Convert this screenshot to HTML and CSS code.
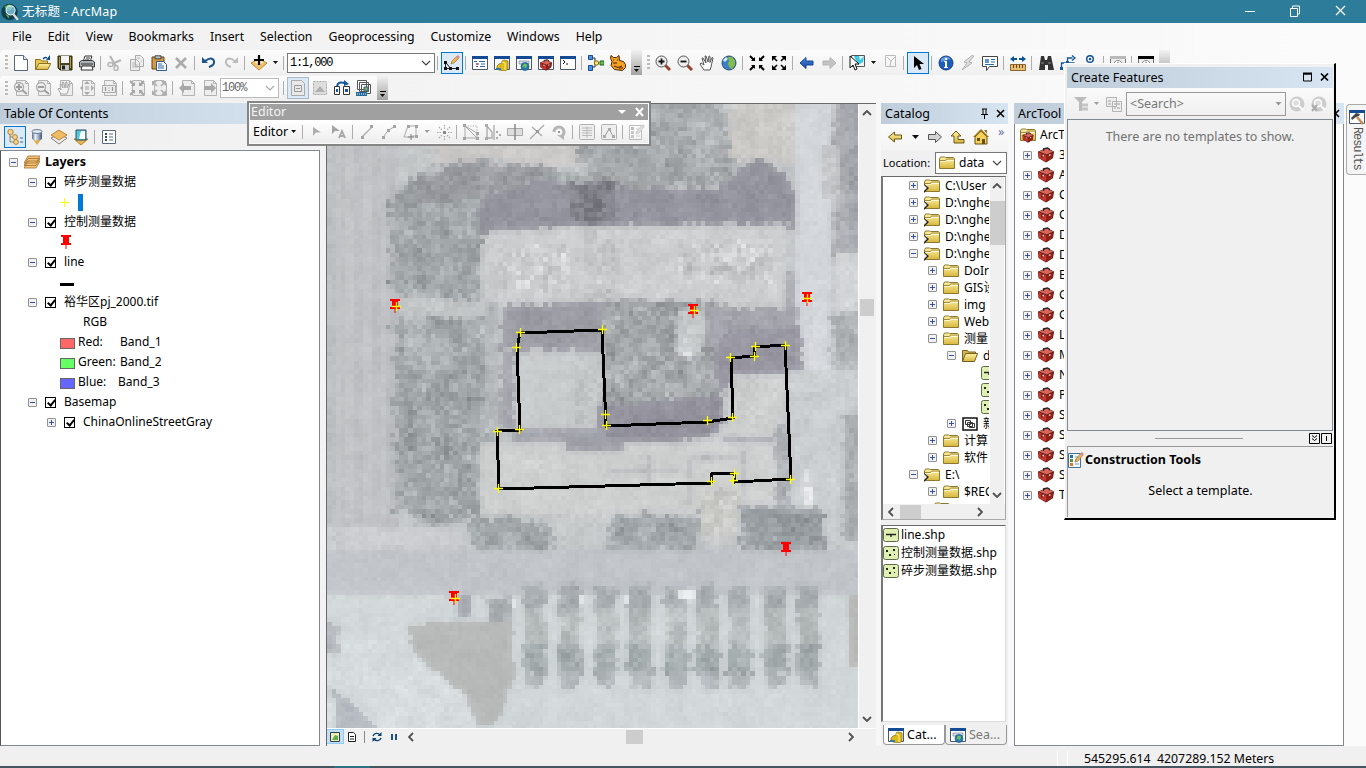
FILE: index.html
```html
<!DOCTYPE html>
<html lang="zh-CN">
<head>
<meta charset="utf-8">
<title>无标题 - ArcMap</title>
<link rel="stylesheet" href="styles.css">
</head>
<body>
<svg class="defs" aria-hidden="true">
<defs>
<linearGradient id="gold" x1="0" y1="0" x2="0" y2="1"><stop offset="0" stop-color="#fff3a8"/><stop offset="1" stop-color="#d8b63c"/></linearGradient>
<linearGradient id="blue" x1="0" y1="0" x2="0" y2="1"><stop offset="0" stop-color="#4f8ee0"/><stop offset="1" stop-color="#123f9c"/></linearGradient>
<linearGradient id="cyl" x1="0" y1="0" x2="1" y2="0"><stop offset="0" stop-color="#59718c"/><stop offset=".35" stop-color="#e9f0f7"/><stop offset="1" stop-color="#3f5672"/></linearGradient>
</defs>
<symbol id="app" viewBox="0 0 16 16"><circle cx="7.500" cy="8" r="7.300" fill="#123d4d"/><path d="M3 3l4-2 4 2-2 3-4 1zM4 10l3 1v3z" fill="#5fae55"/><circle cx="8.500" cy="6.500" r="4" fill="#8fd3ee" fill-opacity=".75" stroke="#d8eef4"/><path d="M11 10l4 5" stroke="#e9e2d8" stroke-width="2"/></symbol>
<symbol id="new" viewBox="0 0 16 16"><path d="M1.500.5h9l4 4v11h-13z" fill="#fff" stroke="#59677a"/><path d="M10.500.5v4h4" fill="#dfe8f2" stroke="#59677a"/></symbol>
<symbol id="open" viewBox="0 0 16 16"><path d="M.5 14.500V4.500h5l1 1.500h6v3" fill="#e9c94b" stroke="#8a7024"/><path d="M.8 14.500l3-6h12l-3 6z" fill="url(#gold)" stroke="#8a7024"/><path d="M8 4q2-2.500 4-1" fill="none" stroke="#0c4a86" stroke-width="1.500"/><path d="M15 0v5h-4z" fill="#0c4a86"/></symbol>
<symbol id="save" viewBox="0 0 16 16"><path d="M1 1h14v14H3l-2-2z" fill="#4a431f" stroke="#332e15"/><path d="M2 2h1v11H2zM13 2h1v11h-1z" fill="#b5a435"/><path d="M4 1h8v7H4z" fill="#f2f4f6"/><path d="M4 10h8v5H4z" fill="#c6c9cc"/><path d="M5 10.500h3v4H5z" fill="#25221a"/></symbol>
<symbol id="print" viewBox="0 0 16 16"><path d="M4 7l2-6h7l-2 6z" fill="#fff" stroke="#333"/><path d="M.5 7l2-1.500h11L15.500 7v5H.5z" fill="#aeb2b6" stroke="#3c3c3c"/><path d="M2 9h12M7 3h4M6 5h4" stroke="#333"/><path d="M3 11h10l1 4H2z" fill="#fff" stroke="#333"/></symbol>
<symbol id="cut" viewBox="0 0 16 16"><path d="M3 1l6 10M14 5L5 9" stroke="#b5b5b5" stroke-width="2"/><ellipse cx="3.500" cy="9.500" rx="2.500" ry="2" fill="none" stroke="#b5b5b5" stroke-width="1.500"/><ellipse cx="9" cy="13" rx="2" ry="2.500" fill="none" stroke="#b5b5b5" stroke-width="1.500"/></symbol>
<symbol id="copy" viewBox="0 0 16 16"><path d="M6.500.5h5l3 3v8h-8zM1.500 4.500h6l3 3v8h-9z" fill="#eee" stroke="#aaa"/><path d="M3 8h4M3 10h6M3 12h6M8 3h3M12 6h1" stroke="#b6b6b6"/></symbol>
<symbol id="paste" viewBox="0 0 16 16"><path d="M1 2h12v12H1z" fill="#d39a42" stroke="#63431c"/><path d="M4 .8h6v3H4z" fill="#b9c1c9" stroke="#444"/><path d="M5.500 6.500h7l3 3v6h-10z" fill="#fff" stroke="#31598c"/><path d="M7 9h4M7 11h6M7 13h6" stroke="#2d62a7"/></symbol>
<symbol id="del" viewBox="0 0 16 16"><path d="M3 3l10 10M13 3L3 13" stroke="#ababab" stroke-width="2.600"/></symbol>
<symbol id="undo" viewBox="0 0 16 16"><path d="M4 6q7-5 9 0 1 4-5 6" fill="none" stroke="#1d528c" stroke-width="2"/><path d="M1 2v6h6z" fill="#1d528c"/></symbol>
<symbol id="redo" viewBox="0 0 16 16"><path d="M12 6q-7-5-9 0-1 4 5 6" fill="none" stroke="#bdbdbd" stroke-width="2"/><path d="M15 2v6H9z" fill="#bdbdbd"/></symbol>
<symbol id="add" viewBox="0 0 16 16"><path d="M0 8l8-4 8 4-8 7z" fill="#eec36b" stroke="#b98532"/><path d="M3 7l5-2 5 2-5 3z" fill="#ffe6b3"/><path d="M8 0v10M3 5h10" stroke="#000" stroke-width="2.200"/></symbol>
<symbol id="edit" viewBox="0 0 16 16"><path d="M1.500 7l5 6.500h8M1.500 7v6.500h5" fill="none" stroke="#222"/><path d="M0 6h3v3H0zM0 12h3v3H0zM5 12h3v3H5zM12 12h3v3h-3z" fill="#111"/><path d="M7 9l1-3 5-5 2 2-5 5z" fill="#efb756" stroke="#96631f" stroke-width=".6"/><path d="M12 2l2-2 2 2-2 2z" fill="#dc8d8d"/></symbol>
<symbol id="win" viewBox="0 0 16 16"><path d="M.5 1.500h15v13H.5z" fill="#fdfdfd" stroke="#4d5968"/><path d="M0 1h16v3H0z" fill="#154b95"/></symbol>
<symbol id="toc" viewBox="0 0 16 16"><use href="#win"/><path d="M2 6.500h3M7 6.500h6M4 9h3M9 9h4M4 11.500h2M8 11.500h5" stroke="#2b64a4"/><path d="M4 9h2M4 11.500h1" stroke="#d22"/></symbol>
<symbol id="cat" viewBox="0 0 16 16"><use href="#win"/><path d="M5 9l3-1v-2l2-1 4 1v8l-3 2-6-1-2-1v-3z" fill="#ddb91b" stroke="#80690f" stroke-width=".7"/><path d="M8 7l3 1v7" fill="none" stroke="#fff08b"/><path d="M2 13h5v2H2z" fill="#3379a4"/></symbol>
<symbol id="search" viewBox="0 0 16 16"><use href="#win"/><path d="M3 6h10v3H3z" fill="#d8e2ed" stroke="#72869b" stroke-width=".7"/><circle cx="9" cy="11.500" r="4" fill="#2678b7" stroke="#205a7b" stroke-width=".7"/><path d="M8 8.500l3 1-1 4-2-2-2 1z" fill="#73c553"/></symbol>
<symbol id="boxwin" viewBox="0 0 16 16"><use href="#win"/><use href="#tbx" x="1.500" y="4" width="13" height="12"/></symbol>
<symbol id="py" viewBox="0 0 16 16"><use href="#win"/><path d="M3 5l2 2-2 2M6 9h2" fill="none" stroke="#111"/></symbol>
<symbol id="model" viewBox="0 0 16 16"><path d="M4 3h3v9H4M7 8h3M12 8h2" fill="none" stroke="#333"/><path d="M.5.5h4v4h-4zM.5 10.500h4v5h-4z" fill="#4c94e3" stroke="#174e9a"/><circle cx="8.500" cy="8" r="2.200" fill="#ffe56a" stroke="#7e6717"/><path d="M12 6h4v4h-4z" fill="#6bc158" stroke="#1d6625"/></symbol>
<symbol id="cat2" viewBox="0 0 16 16"><path d="M1 .5l2.500 2h3L9 .5l.5 5 4 1q3 3 2 6l-3 3-8-1-3.500-4 1-4-1.500-3z" fill="#f6a126" stroke="#492500"/><path d="M3 5h1M7 5h1M3 8h4M4 11q4 3 8 0M9 13h4" stroke="#492500" fill="none"/></symbol>
<symbol id="zoomin" viewBox="0 0 16 16"><path d="M10 10l5 5" stroke="#95442b" stroke-width="3"/><circle cx="6.500" cy="6.500" r="5.500" fill="#eee" stroke="#555"/><path d="M3.500 6.500h6M6.500 3.500v6" stroke="#111" stroke-width="1.800"/></symbol>
<symbol id="zoomout" viewBox="0 0 16 16"><path d="M10 10l5 5" stroke="#95442b" stroke-width="3"/><circle cx="6.500" cy="6.500" r="5.500" fill="#eee" stroke="#555"/><path d="M3.500 6.500h6" stroke="#111" stroke-width="1.800"/></symbol>
<symbol id="hand" viewBox="0 0 16 16"><path d="M5 15l-4-6 1-1 3 2-2-7h1l3 5-1-7h1l2 6 1-6 1 .5v6l2-5 1 .5-2 9-1 3z" fill="#fff" stroke="#555"/></symbol>
<symbol id="globe" viewBox="0 0 16 16"><circle cx="8" cy="8" r="7" fill="#3c80c6" stroke="#315273"/><path d="M7 2l4 0 3 4v4l-3 4-2-1-2-4 1-3z" fill="#86bd48"/><path d="M3 6l3-3" stroke="#d8efff" stroke-width="2.500"/></symbol>
<symbol id="fixin" viewBox="0 0 16 16"><path d="M1 1l4 4M15 1l-4 4M1 15l4-4M15 15l-4-4" stroke="currentColor" stroke-width="2"/><path d="M6 2v4H2zM10 2v4h4zM6 14v-4H2zM10 14v-4h4z" fill="currentColor"/></symbol>
<symbol id="fixout" viewBox="0 0 16 16"><path d="M2 2l4 4M14 2l-4 4M2 14l4-4M14 14l-4-4" stroke="currentColor" stroke-width="1.600"/><path d="M1 1h5L1 6zM15 1h-5l5 5zM1 15h5l-5-5zM15 15h-5l5-5z" fill="currentColor"/></symbol>
<symbol id="back" viewBox="0 0 16 16"><path d="M1 8l6-5.500v3.500h7v4H7v3.500z" fill="url(#blue)" stroke="#194693"/></symbol>
<symbol id="fwd" viewBox="0 0 16 16"><path d="M15 8L9 2.500V6H2v4h7v3.500z" fill="#c3c3c3" stroke="#b4b4b4"/></symbol>
<symbol id="selfeat" viewBox="0 0 16 16"><path d="M2.500.5h13v11h-13z" fill="#f4f4f4" stroke="#555"/><path d="M5 1h5l1 4 4-4-1 6-5 3z" fill="#38cce4"/><path d="M1 1v12l3-3 2 5 2-1-2-5h4z" fill="#fff" stroke="#111"/></symbol>
<symbol id="clearsel" viewBox="0 0 16 16"><path d="M3.500.500h10v11h-10zM5 2l4 4 4-4M9 6l-1 5" fill="none" stroke="#bbb"/></symbol>
<symbol id="arrow" viewBox="0 0 16 16"><path d="M4 1v12l3-3 2 5 2.500-1-2-5H14z" fill="currentColor"/></symbol>
<symbol id="earrow" viewBox="0 0 16 16"><path d="M4 3v9l3-3.500h5z" fill="#adadad"/></symbol>
<symbol id="info" viewBox="0 0 16 16"><circle cx="8" cy="8" r="7" fill="#1d5dbb" stroke="#153d85"/><path d="M3 4q5-5 10 0-4 1-10 3z" fill="#669ae4"/><path d="M7 3h2v2H7zM6 6h3v6h1v1H6v-1h1V7H6z" fill="#fff"/></symbol>
<symbol id="bolt" viewBox="0 0 16 16"><path d="M12 .5L4 7l3 1-5 7 10-7-3-1 5-6z" fill="#ddd" stroke="#b3b3b3"/></symbol>
<symbol id="popup" viewBox="0 0 16 16"><path d="M.5 1.500h15v10h-8l-3 4v-4h-4z" fill="#fff" stroke="#444"/><path d="M3 4h4v4H3z" fill="#5b99d2"/><path d="M9 4.500h4M9 7h4M3 9.500h9" stroke="#266fac"/></symbol>
<symbol id="measure" viewBox="0 0 16 16"><path d="M0 4l4-3v2h3v2H4v2zM16 4l-4-3v2H9v2h3v2z" fill="#075293"/><path d="M.5 9.500h15v6H.5z" fill="#e8be75" stroke="#8b652c"/><path d="M3.500 10v3M6.500 10v3M9.500 10v3M12.500 10v3" stroke="#694513"/></symbol>
<symbol id="find" viewBox="0 0 16 16"><path d="M3 1h3l1 4h2l1-4h3l3 14h-6v-5H7v5H1z" fill="#333"/><path d="M3 8h3M10 8h3" stroke="#888"/></symbol>
<symbol id="path" viewBox="0 0 16 16"><path d="M1.500 14V8h6V3h5M12 .5l3 2.500-3 2.500M7 8h7v6" fill="none" stroke="#16579a" stroke-width="1.300"/><path d="M0 12h3v3H0zM6 6h3v3H6z" fill="#16579a"/></symbol>
<symbol id="xy" viewBox="0 0 16 16"><circle cx="8" cy="4" r="3.300" fill="#fff" stroke="#17538c" stroke-width="1.500"/><circle cx="8" cy="4" r="1.300" fill="#17538c"/></symbol>
<symbol id="clockwin" viewBox="0 0 16 16"><path d="M.5 1.500h15v13H.5z" fill="#eee" stroke="#777"/><path d="M0 1h16v3H0z" fill="currentColor"/><circle cx="8" cy="10" r="4.500" fill="#fff" stroke="#888"/><path d="M8 7v3h2" stroke="#555" fill="none"/></symbol>
<symbol id="gpage" viewBox="0 0 16 16"><path d="M3.500.5h9l3 3v12h-12z" fill="#eee" stroke="#b3b3b3"/><path d="M12.500.5v3h3" fill="none" stroke="#b3b3b3"/></symbol>
<symbol id="pzin" viewBox="0 0 16 16"><use href="#gpage"/><circle cx="6" cy="7" r="4.500" fill="#eee" stroke="#aaa" stroke-width="1.300"/><path d="M3 7h6M6 4v6M9 10l5 4" stroke="#9d9d9d" stroke-width="2"/></symbol>
<symbol id="pzout" viewBox="0 0 16 16"><use href="#gpage"/><circle cx="6" cy="7" r="4.500" fill="#eee" stroke="#aaa" stroke-width="1.300"/><path d="M3 7h6M9 10l5 4" stroke="#9d9d9d" stroke-width="2"/></symbol>
<symbol id="phand" viewBox="0 0 16 16"><use href="#gpage"/><path d="M4 14L1 9l1-1 2 2-1-6h1l2 4-.5-6h1l1.500 6L9 2h1v6l2-4h1l-2 7-1 3z" fill="#f3f3f3" stroke="#a8a8a8"/></symbol>
<symbol id="pfull" viewBox="0 0 16 16"><use href="#gpage"/><path d="M8 1l3 3H5zM8 15l3-3H5zM1 8l3-3v6zM15 8l-3-3v6z" fill="#aaa"/><path d="M6 6h4v4H6z" fill="#c9c9c9"/></symbol>
<symbol id="pone" viewBox="0 0 16 16"><use href="#gpage"/><path d="M1.500 5.500h13v7h-13z" fill="#eee" stroke="#aaa"/><path d="M4.500 7v4M11.500 7v4M8 7.500v1M8 10v1" stroke="#999" stroke-width="1.300"/></symbol>
<symbol id="pin4" viewBox="0 0 16 16"><use href="#gpage"/><g color="#a5a5a5"><use href="#fixin"/></g></symbol>
<symbol id="pout4" viewBox="0 0 16 16"><use href="#gpage"/><g color="#adadad"><use href="#fixout"/></g></symbol>
<symbol id="pback" viewBox="0 0 16 16"><use href="#gpage"/><path d="M0 8l5-5v3h7v4H5v3z" fill="#a8a8a8"/></symbol>
<symbol id="pfwd" viewBox="0 0 16 16"><use href="#gpage"/><path d="M15 8l-5-5v3H3v4h7v3z" fill="#a8a8a8"/></symbol>
<symbol id="draft" viewBox="0 0 16 16"><path d="M1.500.5h10l3 3v12h-13z" fill="#e8e8e8" stroke="#aaa"/><path d="M4.500 5.500h7v6h-7zM6 8.500h4" fill="none" stroke="#999"/></symbol>
<symbol id="focus" viewBox="0 0 16 16"><path d="M1.500 1.500h13v13h-13z" fill="#ddd" stroke="#aaa" stroke-dasharray="2 1"/><path d="M3 12l5-6 5 6z" fill="#b0b0b0"/></symbol>
<symbol id="layout" viewBox="0 0 16 16"><path d="M.5 6.500h5v8h-5zM9.500 6.500h6v8h-6z" fill="#fff" stroke="#333"/><path d="M3 6q1-5 8-3" stroke="#155798" stroke-width="2" fill="none"/><path d="M10 0l5 4-5 2zM2 9h2v3H2zM11 9h3v3h-3z" fill="#155798"/></symbol>
<symbol id="ddp" viewBox="0 0 16 16"><path d="M1.500.5h9v9h-9zM3.500 2.500h9v9h-9zM5.500 4.500h9v9h-9z" fill="#fff" stroke="#555"/><path d="M8 7h4v4H8z" fill="#74aa70" stroke="#467"/><path d="M0 12h11v4H0z" fill="#246799"/><path d="M1 14h9" stroke="#fff" stroke-dasharray="1 1"/></symbol>
<symbol id="lorder" viewBox="0 0 16 16"><path d="M3 5v8h5M3 8h5" fill="none" stroke="#8f8160"/><path d="M13 9h3M13 13h3" stroke="#34689c"/><circle cx="3.500" cy="3" r="2.700" fill="#f7d48d" stroke="#b28236"/><circle cx="8" cy="8" r="2.400" fill="#f7d48d" stroke="#b28236"/><circle cx="9" cy="13" r="2.400" fill="#f7d48d" stroke="#b28236"/></symbol>
<symbol id="lsource" viewBox="0 0 16 16"><path d="M3 9h10l-5 7z" fill="#e2ad48"/><path d="M3 2v8q5 3 10 0V2z" fill="url(#cyl)"/><ellipse cx="8" cy="2.500" rx="5" ry="2" fill="#e3e9ef" stroke="#657d98"/></symbol>
<symbol id="lvis" viewBox="0 0 16 16"><path d="M0 9l8-4 8 4-8 6z" fill="#eee" stroke="#807f77"/><path d="M0 6l8-5 8 5-8 5z" fill="#eebd63" stroke="#b88437"/></symbol>
<symbol id="lsel" viewBox="0 0 16 16"><path d="M1 10h14l-7 6z" fill="#e6b451" stroke="#b8832c"/><path d="M3 1h10v10H3z" fill="#54c8e0" stroke="#234c5f"/><path d="M8 2h4v8H6z" fill="#fff"/></symbol>
<symbol id="opts" viewBox="0 0 16 16"><path d="M1.500 1.500h13v13h-13z" fill="#fff" stroke="#596c85"/><path d="M4 4h2v2H4zM4 7h2v2H4zM4 10h2v2H4z" fill="#334b6a"/><path d="M8 5h4M8 8h4M8 11h4" stroke="#596c85"/></symbol>
<symbol id="layers" viewBox="0 0 16 14"><path d="M4 6h12l-4 7H0zM4 3.500h12l-4 7H0zM4 1h12l-4 7H0z" fill="#f1c477" stroke="#a3702f" stroke-width=".8"/></symbol>
<symbol id="tack" viewBox="0 0 10 14"><path d="M0 0h10v2H8v6h2v2H0V8h2V2H0z" fill="red"/><path d="M5 9v5" stroke="red"/></symbol>
<symbol id="tbx" viewBox="0 0 16 16"><path d="M0 4.500L9 1l7 3.500-1 6.500-7 4.500L.5 11z" fill="#5e120d"/><path d="M.5 5l8 3.200v6.800L1 11z" fill="#c5362c"/><path d="M9 8.300l6.500-3.300-.8 6-5.700 3.800z" fill="#8f211a"/><path d="M1 4.400l8-3 6.300 3.100-6.600 3z" fill="#d9665b"/><path d="M5.500 4V1.800l4-.8 2 1v1.500" fill="none" stroke="#222" stroke-width="1.200"/><path d="M4 6.500v4M6 7.500v1" stroke="#2c0f0c"/><path d="M4.500 8.500h1.500M11 8.500l1.500-1" stroke="#f1dcc8" stroke-width="1.500"/></symbol>
<symbol id="folder" viewBox="0 0 16 16"><path d="M.5 13.500V4l1-2h4l1 .5h8l1 1v10z" fill="url(#gold)" stroke="#8d7831"/><path d="M1 5.500h5.500l1-1.500h8" fill="none" stroke="#a5883b"/><path d="M1.500 6.500h5.500l.5-1h7.500" stroke="#fffad8" fill="none"/></symbol>
<symbol id="cfolder" viewBox="0 0 16 16"><use href="#folder"/><path d="M0 6l5 4-5 5z" fill="#222"/><path d="M0 7l3 3-3 3z" fill="#eee"/></symbol>
<symbol id="ofolder" viewBox="0 0 16 16"><path d="M.5 13.500v-11h5l1 1.500h7v4" fill="#d7b84e" stroke="#766022"/><path d="M.5 13.500l3-8h12l-3 8z" fill="url(#gold)" stroke="#766022"/></symbol>
<symbol id="tbfolder" viewBox="0 0 16 16"><use href="#folder"/><use href="#tbx" x="2" y="5" width="12" height="11"/></symbol>
<symbol id="shpline" viewBox="0 0 16 14"><rect x=".5" y=".5" width="15" height="13" rx="2" fill="#e0f0b2" stroke="#5e684b"/><path d="M3 6.500h10M8 6v3" stroke="#222" stroke-width="1.400" fill="none"/></symbol>
<symbol id="shppt" viewBox="0 0 16 14"><rect x=".5" y=".5" width="15" height="13" rx="2" fill="#e0f0b2" stroke="#5e684b"/><path d="M3 4h2v2H3zM10 3h2v2h-2zM6 8h2v2H6zM11 8h1v1h-1z" fill="#222"/></symbol>
<symbol id="cad" viewBox="0 0 16 14"><path d="M1 1h14v12H1z" fill="#fff" stroke="#111" stroke-width="1.500"/><path d="M3.500 3.500h5v4h-5zM5.500 5.500h5v4h-5zM7.500 6.500h5v4h-5z" fill="#fff" stroke="#333"/></symbol>
<symbol id="gback" viewBox="0 0 16 16"><path d="M1.500 8l6-5v3h7v4h-7v3z" fill="url(#gold)" stroke="#6a5813"/></symbol>
<symbol id="gfwd" viewBox="0 0 16 16"><path d="M14.500 8l-6-5.500v3h-7v5h7v3z" fill="#d4d4d4" stroke="#555"/></symbol>
<symbol id="up" viewBox="0 0 16 16"><path d="M6 2l5 5H8v3.500h6v3.500H4V7H1z" fill="url(#gold)" stroke="#6a5813"/></symbol>
<symbol id="home" viewBox="0 0 16 16"><path d="M2 8l6-6 6 6v7H2z" fill="#f5d05a" stroke="#68521a"/><path d="M8 0l8 8h-2L8 2.500 2 8H0zM11 1h3v4z" fill="#9b7719"/><path d="M4 9h3v3H4zM9 10h3v5H9z" fill="#654f19"/></symbol>
<symbol id="filter" viewBox="0 0 16 16"><path d="M0 1h13L8 6v9H5V6z" fill="#bcbcbc"/><path d="M8 9h6M8 13h6" stroke="#c5c5c5" stroke-width="3"/></symbol>
<symbol id="org" viewBox="0 0 16 16"><path d="M.5 1.500h10v9H.5zM6.500 5.500h9v10h-9z" fill="#eee" stroke="#b3b3b3"/><path d="M2 5h3M2 8h3M8 8h2M11 8h3M8 12h2M11 12h3" stroke="#bbb" stroke-width="1.500"/></symbol>
<symbol id="gsearch" viewBox="0 0 16 16"><circle cx="8" cy="8" r="7.500" fill="#cdcdcd"/><circle cx="7" cy="7" r="3.500" fill="#ddd" stroke="#fff" stroke-width="1.500"/><path d="M10 10l4 4" stroke="#fff" stroke-width="2"/></symbol>
<symbol id="gclear" viewBox="0 0 16 16"><use href="#gsearch"/><path d="M1 9l5 6M6 9l-5 6" stroke="#aaa" stroke-width="2"/></symbol>
<symbol id="ctools" viewBox="0 0 16 16"><path d="M.5 1.500h12v14H.5z" fill="#f4f9ff" stroke="#41719a"/><path d="M2 3h3v3H2z" fill="#2f6da8"/><path d="M2 7h3v3H2z" fill="#5b9137"/><path d="M2 11h3v3H2z" fill="#d87b24"/><path d="M7 5h4M7 8h3M7 12h4" stroke="#739cc0"/><path d="M7 10l1-3 5-6 2 2-5 6z" fill="#e9b65d" stroke="#8a642c" stroke-width=".6"/><path d="M12 2l2-2 2 2-2 2z" fill="#d58d8d"/></symbol>
<symbol id="hammer" viewBox="0 0 16 16"><use href="#win"/><path d="M2 9l5-5 4 1-1 2-3 1-4 3z" fill="#444"/><path d="M8 8l6 7" stroke="#c88d55" stroke-width="2.500"/></symbol>
<symbol id="etext" viewBox="0 0 16 16"><path d="M1 1v9l3-3h5z" fill="#a5a5a5"/><path d="M8 14l3-7 3 7M9 12h4" fill="none" stroke="#a8a8a8" stroke-width="1.800"/></symbol>
<symbol id="eseg" viewBox="0 0 16 16"><path d="M3 13L13 3" stroke="#aaa" stroke-width="1.300"/><path d="M2 12h3v3H2zM11 1h3v3h-3z" fill="#a4a4a4"/></symbol>
<symbol id="earc" viewBox="0 0 16 16"><path d="M3 14Q4 7 13 3" fill="none" stroke="#aaa"/><path d="M1 12h3v3H1zM6 5h3v3H6zM12 1h3v3h-3z" fill="#a4a4a4"/></symbol>
<symbol id="etrace" viewBox="0 0 16 16"><path d="M6 13H1L5 2h8v10H9" fill="none" stroke="#aaa"/><path d="M4 1h3v3H4zM12 1h3v3h-3zM12 11h3v3h-3z" fill="#a4a4a4"/><path d="M5 13h6M8 10v6" stroke="#777"/></symbol>
<symbol id="epoint" viewBox="0 0 16 16"><path d="M7 7h3v3H7z" fill="#888"/><path d="M8.500 1v4M8.500 12v4M1 8.500h4M12 8.500h4M3 3l3 3M14 3l-3 3M3 14l3-3M14 14l-3-3" stroke="#aaa" stroke-width="1.200" stroke-dasharray="1.500 1"/></symbol>
<symbol id="evert" viewBox="0 0 16 16"><path d="M2 2v12h12zM2 2l12 7v5" fill="none" stroke="#aaa"/><path d="M2 2h12v7" stroke="#bbb" fill="none" stroke-dasharray="1.500 1"/><path d="M0 0h3v3H0zM0 13h3v3H0zM13 13h3v3h-3zM13 8h3v3h-3z" fill="#a4a4a4"/></symbol>
<symbol id="eresh" viewBox="0 0 16 16"><path d="M2 2v12h5V8zM9 1v15" fill="none" stroke="#aaa" stroke-width="1.300"/><path d="M0 0h3v3H0zM0 13h3v3H0zM11 7h2v2h-2zM11 13h2v2h-2zM14 10h2v2h-2z" fill="#aaa"/></symbol>
<symbol id="ecut" viewBox="0 0 16 16"><path d="M.5 4.500h15v7H.5z" fill="#ddd" stroke="#aaa"/><path d="M8 0v16" stroke="#888" stroke-width="1.500"/></symbol>
<symbol id="esplit" viewBox="0 0 16 16"><path d="M1 15L15 1M3 3l10 9" stroke="#aaa" stroke-width="1.300"/><path d="M7 6h3v3H7z" fill="#999"/></symbol>
<symbol id="erot" viewBox="0 0 16 16"><path d="M3 8a5 5 0 1 1 8 4" fill="none" stroke="#b5b5b5" stroke-width="3"/><path d="M6 11h7v5z" fill="#b5b5b5"/><path d="M7 7h2v2H7z" fill="#999"/></symbol>
<symbol id="etab" viewBox="0 0 16 16"><rect x=".5" y=".5" width="15" height="15" rx="1" fill="#eee" stroke="#b0b0b0"/><path d="M3 4h10M3 6.500h10M3 9h10M3 11.500h10M8 3v11" stroke="#bbb"/></symbol>
<symbol id="esk" viewBox="0 0 16 16"><rect x=".5" y=".5" width="15" height="15" rx="1" fill="#eee" stroke="#b0b0b0"/><path d="M4 12l4-7 4 7" fill="none" stroke="#999"/><path d="M2 11h3v3H2zM7 4h3v3H7zM11 11h3v3h-3z" fill="#aaa"/></symbol>
</svg>

<header class="titlebar"><svg class="i18"><use href="#app"/></svg><span>无标题 - ArcMap</span>
<svg class="winctl" width="112" height="16"><path d="M1 7.500h10" stroke="#fff"/><path d="M46.500 4.500h7v8h-7zM48.500 4v-2h7v8h-2" fill="none" stroke="#fff"/><path d="M92 2l9 9M101 2l-9 9" stroke="#fff" stroke-width="1.200"/></svg></header>
<nav class="menubar"><span>File</span><span>Edit</span><span>View</span><span>Bookmarks</span><span>Insert</span><span>Selection</span><span>Geoprocessing</span><span>Customize</span><span>Windows</span><span>Help</span></nav>
<div class="tbrow">
  <div class="toolbar" data-items="grip new open save print | cut copy paste del | undo redo | add ▾ | scale | *edit | toc cat search boxwin py | model cat2 more"></div>
  <div class="toolbar" data-items="grip zoomin zoomout hand globe | fixin fixout | back fwd | selfeat ▾ clearsel | *arrow | info bolt popup | measure | find path xy | ~clockwin | clockwin more"></div>
</div>
<div class="tbrow second"><div class="toolbar" data-items="grip pzin pzout phand pfull pone | pin4 pout4 | pback pfwd percent | *draft focus layout ddp more"></div></div>

<main class="work">
  <section class="toc">
    <h2 class="cap">Table Of Contents</h2>
    <div class="tools toctools" data-items="*lorder lsource lvis lsel | opts"></div>
    <div class="tree toctree">
      <div class="row"><i class="ex"></i><svg class="i16"><use href="#layers"/></svg><b>Layers</b></div>
      <div class="row l1"><i class="ex"></i><i class="ck"></i><span>碎步测量数据</span></div>
      <div class="row sym"><svg width="24" height="18"><path d="M0 9.500h9M4.500 5v9" stroke="#ff0"/><path d="M18 1h5v17h-5z" fill="#0078d7"/></svg></div>
      <div class="row l1"><i class="ex"></i><i class="ck"></i><span>控制测量数据</span></div>
      <div class="row sym"><svg class="tk" width="10" height="14"><use href="#tack"/></svg></div>
      <div class="row l1"><i class="ex"></i><i class="ck"></i><span>line</span></div>
      <div class="row sym"><i class="dash"></i></div>
      <div class="row l1"><i class="ex"></i><i class="ck"></i><span>裕华区pj_2000.tif</span></div>
      <div class="row rgb">RGB</div>
      <div class="row sym"><i class="sw red"></i><span class="ch">Red:</span><span>Band_1</span></div>
      <div class="row sym"><i class="sw green"></i><span class="ch">Green:</span><span>Band_2</span></div>
      <div class="row sym"><i class="sw blue"></i><span class="ch b">Blue:</span><span>Band_3</span></div>
      <div class="row l1"><i class="ex"></i><i class="ck"></i><span>Basemap</span></div>
      <div class="row l2"><i class="ex plus"></i><i class="ck"></i><span>ChinaOnlineStreetGray</span></div>
    </div>
  </section>

  <section class="mapview">
    <div class="mapmain">
      <div class="map">
        <canvas id="raster" width="118" height="139"></canvas>
        <svg id="vectors" class="vectors" viewBox="327 104 531 624"></svg>
      </div>
      <div class="vscroll"><svg width="10" height="6"><path d="M1 5l4-4 4 4"/></svg><i></i><svg width="10" height="6"><path d="M1 1l4 4 4-4"/></svg></div>
    </div>
    <div class="hbar"><i class="vbtn on"><svg width="10" height="10"><path d="M.5.5h9v9h-9z" fill="#f3eeb0" stroke="#24445c"/><path d="M2 8l3-5 3 1v4z" fill="#65a853"/></svg></i><i class="vbtn"><svg width="9" height="10"><path d="M.5.5h5l2 2v7h-7zM2 4.500h4M2 7h4" fill="#fff" stroke="#222"/></svg></i><i class="vsep"></i><i class="vbtn r"><svg width="10" height="10"><path d="M1 4a4 4 0 0 1 7-1M9 6a4 4 0 0 1-7 1" fill="none" stroke="#0b4070" stroke-width="1.400"/><path d="M9.500 0v4h-4zM.5 10V6h4z" fill="#0b4070"/></svg></i><i class="vbtn p"><svg width="6" height="8"><path d="M0 1h2v6H0zM4 1h2v6H4z" fill="#1a4f94"/></svg></i><div class="hs"><svg width="6" height="10"><path d="M5 1L1 5l4 4"/></svg><i></i><svg width="6" height="10"><path d="M1 1l4 4-4 4"/></svg></div></div>
  </section>

  <section class="catalog">
    <h2 class="cap">Catalog<svg width="28" height="12"><path d="M4 1h5M5 1v5M8 1v5M3 6.500h7M6.500 7v4" stroke="#000" fill="none"/><path d="M19 2l7 7M26 2l-7 7" stroke="#000" stroke-width="1.600"/></svg></h2>
    <div class="cattools"><svg class="i16"><use href="#gback"/></svg><i class="dd"></i><svg class="i16"><use href="#gfwd"/></svg><svg class="i16"><use href="#up"/></svg><svg class="i16"><use href="#home"/></svg><span>»</span></div>
    <div class="loc"><span>Location:</span><div class="combo"><svg class="i16"><use href="#folder"/></svg><span>data</span><svg class="chev" width="10" height="6"><path d="M1 1l4 4 4-4"/></svg></div></div>
    <div class="cattree"><div class="treetop"><div class="items" id="cattree"></div><div class="vscroll mini"><svg width="10" height="6"><path d="M1 5l4-4 4 4"/></svg><i></i><svg width="10" height="6"><path d="M1 1l4 4 4-4"/></svg></div></div>
      <div class="hs mini"><svg width="6" height="10"><path d="M5 1L1 5l4 4"/></svg><i></i><svg width="6" height="10"><path d="M1 1l4 4-4 4"/></svg></div></div>
    <div class="files"><div><svg><use href="#shpline"/></svg>line.shp</div><div><svg><use href="#shppt"/></svg>控制测量数据.shp</div><div><svg><use href="#shppt"/></svg>碎步测量数据.shp</div></div>
    <div class="tabs"><div class="on"><svg class="i16"><use href="#cat"/></svg>Cat...</div><div><svg class="i16"><use href="#search"/></svg>Sea...</div></div>
  </section>

  <section class="toolbox"><h2 class="cap">ArcTool<svg width="12" height="12"><path d="M2 2l7 7M9 2l-7 7" stroke="#000" stroke-width="1.600"/></svg></h2><div class="tbtree" id="tbtree"></div></section>
  <aside class="results"><svg class="i16"><use href="#hammer"/></svg><span>Results</span></aside>
</main>
<footer class="status"><i class="s1"></i><i class="s2"></i><span>545295.614&nbsp; 4207289.152 Meters</span></footer>
<div class="taskedge"><i></i></div>

<div class="editor"><div class="etitle"><span>Editor</span><svg width="30" height="12"><path d="M0 4h8l-4 4z" fill="#fff"/><path d="M18 2l7 8M25 2l-7 8" stroke="#fff" stroke-width="2"/></svg></div>
<div class="tools" data-items="label | earrow etext | eseg earc etrace ▿ epoint | evert eresh ecut esplit erot | etab esk | ctools-off"></div></div>

<div class="create"><h2 class="cap">Create Features<svg width="28" height="12"><path d="M1.500 2h8v7h-8z" fill="none" stroke="#000"/><path d="M1 1.500h9" stroke="#000" stroke-width="2"/><path d="M19 1.500l7 7M26 1.500l-7 7" stroke="#000" stroke-width="1.700"/></svg></h2>
  <div class="ctop"><svg class="i16"><use href="#filter"/></svg><i class="dd g"></i><svg class="i16 org"><use href="#org"/></svg><div class="srch">&lt;Search&gt;<i class="dd g"></i></div><svg class="i16"><use href="#gsearch"/></svg><svg class="i16 clr"><use href="#gclear"/></svg></div>
  <div class="tmpl">There are no templates to show.</div>
  <div class="split"><i></i><svg width="24" height="11"><path d="M.5.5h10v10H.5zM12.500.5h10v10h-10zM17.500 3v5M3 2.500l2.500 2L8 2.500M3 5.500l2.500 2L8 5.500" fill="none" stroke="#000"/></svg></div>
  <div class="cons"><div class="chead"><svg class="i16"><use href="#ctools"/></svg><b>Construction Tools</b></div><p>Select a template.</p></div>
</div>
<script src="app.js"></script>
</body>
</html>
```
FILE: styles.css
```css
*{box-sizing:border-box}
body{margin:0;width:1366px;height:768px;overflow:hidden;display:flex;flex-direction:column;position:relative;background:linear-gradient(90deg,#f0f0f0,#fbfbfb);font:12.5px/16px "Noto Sans","Noto Sans CJK SC",sans-serif;color:#000}
i{font-style:normal;display:block}
svg{flex:none;display:block}
.defs{position:absolute;width:0;height:0}
.i16{width:16px;height:16px}
.i18{width:18px;height:18px}
.titlebar{height:23px;flex:none;background:#2d7d9a;color:#fff;display:flex;align-items:center;padding-left:1px;gap:3px}
.titlebar span{letter-spacing:.2px}
.winctl{margin-left:auto;margin-right:10px}
.menubar{height:27px;flex:none;display:flex;align-items:center;padding:1px 0 0 12px;gap:16px;white-space:nowrap;font-size:12.3px}
.tbrow{display:flex;height:25px;flex:none}
.tbrow.second{height:27px}
.toolbar{display:flex;align-items:center;height:25px;padding-left:3px;background:linear-gradient(#fcfcfc,#efefef);border-radius:4px 0 0 4px}
.second .toolbar{height:24px;margin-top:1px}
.tools{display:flex;align-items:center;height:26px}
.btn{width:22px;height:22px;display:flex;align-items:center;justify-content:center}
.btn.on{border:1px solid #0078d7;background:#dbe9f6}
.btn.off{color:#b9b9b9}
.second .btn.on{border-color:#a9bac9}
.btn.faded{filter:grayscale(1) opacity(.4)}
.grip{width:3px;height:15px;margin:0 2px;background:repeating-linear-gradient(#bbb 0 2px,transparent 2px 4px)}
.sep{width:1px;height:14px;margin:0 3px 0 2px;background:#adadad}
.dd{width:5px;height:3px;background:#111;clip-path:polygon(0 0,100% 0,50% 100%)}
.dd.g{background:#999}
.arr{width:11px;display:flex;justify-content:center}
.more{align-self:stretch;width:11px;margin-left:2px;background:linear-gradient(#f2f2f2,#a2a2a2);display:flex;flex-direction:column;align-items:center;justify-content:flex-end;gap:2px;padding-bottom:3px}
.more::before{content:"";width:6px;height:1px;background:#000}
.field{border:1px solid #7a7a7a;background:#fff;height:20px;width:148px;display:flex;align-items:center;justify-content:space-between;padding:0 3px 0 2px;font:12px/14px "Liberation Mono",monospace;letter-spacing:-1.15px}
.field.pct{width:59px;margin-right:2px;border-color:#bbb;color:#666;padding-left:1px}
.field svg path,.chev path{fill:none;stroke:#444;stroke-width:1.2}
.field.pct svg path{stroke:#aaa}
.work{height:644px;flex:none;display:flex;padding-top:1px}
.cap{margin:0;height:21px;flex:none;font-weight:400;font-size:12.5px;line-height:21px;background:linear-gradient(90deg,#bfcddb,#d7e4f2);padding-left:4px;display:flex;align-items:center;white-space:nowrap;overflow:hidden}
.cap svg{margin-left:auto;margin-right:2px}
.toc{width:320px;display:flex;flex-direction:column}
.toctools{padding-left:4px}
.toctree{flex:1;border:1px solid #828790;background:#fff;border-left-color:#555;padding-top:1px}
.row{height:20px;display:flex;align-items:center;padding-left:8px;white-space:nowrap}
.row b{margin-left:5px}
.ex{width:9px;height:9px;flex:none;border:1px solid #929292;border-radius:1px;background:linear-gradient(90deg,#3552a0,#3552a0) center/5px 1px no-repeat,#f1f1f1}
.ex.plus{background:linear-gradient(#3552a0,#3552a0) center/5px 1px no-repeat,linear-gradient(#3552a0,#3552a0) center/1px 5px no-repeat,#f1f1f1}
.row .i16{margin-left:6px}
.row.l1{padding-left:27px}.row.l2{padding-left:46px}
.ck{width:11px;height:11px;margin:0 8px 0 8px;border:1px solid #000;position:relative;flex:none}
.ck::after{content:"";position:absolute;left:3px;top:0;width:3px;height:6px;border:solid #000;border-width:0 2px 2px 0;transform:rotate(40deg)}
.row span{font-size:12px}
.row.sym{padding-left:59px}
.tk{margin-left:1px}
.dash{width:14px;height:3px;background:#000;margin-top:4px}
.row.rgb{padding-left:82px;font-size:12px}
.sw{width:15px;height:11px;border:1px solid #666;margin:3px 3px 0 0}
.red{background:#f66}.green{background:#6f6}.blue{background:#66f}
.ch{width:42px}.ch.b{width:40px}
.mapview{width:550px;margin-left:6px;display:flex;flex-direction:column;border-top:1px solid #696969;border-left:1px solid #696969;background:#f0f0f0}
.mapmain{height:624px;display:flex}
.map{width:531px;height:624px;position:relative;overflow:hidden;background:#ccc}
.map canvas{width:531px;height:625.5px;display:block;image-rendering:pixelated}
.vectors{position:absolute;left:0;top:0;width:531px;height:624px}
.vscroll{width:17px;border-left:1px solid #fff;background:#f0f0f0;display:flex;flex-direction:column;align-items:center;padding:6px 0}
.vscroll svg path,.hs svg path{fill:none;stroke:#505050;stroke-width:1.8}
.vscroll i{width:14px;height:17px;background:#cdcdcd;margin:183px 0 auto}
.hbar{height:16px;display:flex;align-items:center;border-top:1px solid #fff}
.vbtn{width:17px;height:15px;display:flex;align-items:center;justify-content:center}
.vbtn.on{background:#c5def5;border:1px solid #91c9f7;border-left:0}
.vsep{width:1px;height:12px;background:#888;margin-left:3px}
.vbtn.r{margin-left:3px}
.hs{display:flex;align-items:center;flex:1;padding-left:6px}
.hs i{width:17px;height:14px;background:#cdcdcd;margin-left:212px;margin-right:auto}
.hbar .hs svg:last-child{margin-right:22px}
.catalog{width:127px;margin-left:5px;display:flex;flex-direction:column;background:#f0f0f0}
.cattools{height:26px;display:flex;align-items:center;padding-left:6px;background:linear-gradient(#fbfbfb,#f4f4f4)}
.cattools .dd{margin:0 8px 0 9px;width:7px;height:4px}
.cattools svg+svg{margin-left:7px}.cattools span{margin-left:9px;align-self:flex-start;color:#6672ae}
.loc{height:26px;display:flex;align-items:center;padding-left:2px;font-size:11px;justify-content:space-between}
.combo{width:72px;height:22px;margin-right:1px;border:1px solid #777;background:#fff;display:flex;align-items:center;padding:0 4px 0 3px;gap:4px;font-size:12px}
.chev{margin-left:auto}
.cattree{height:344px;width:125px;border:1px solid #aaa;border-top-color:#696969;border-left:2px solid #777;background:#fff;flex:none}
.treetop{display:flex;height:327px;overflow:hidden}
.items{width:106px;overflow:hidden}
.crow{height:17px;display:flex;align-items:center;padding-left:26px;white-space:nowrap;font-size:12px}
.crow .i16{margin:0 5px 0 6px}
.crow.d1{padding-left:45px}.crow.d2{padding-left:64px}.crow.d3{padding-left:92px}
.mini.vscroll{width:15px;padding:6px 0}.mini.vscroll i{height:44px;margin-top:12px;width:15px}
.mini.hs{height:15px;background:#f0f0f0;padding-left:5px}.mini.hs i{width:21px;margin-left:6px}.mini.hs svg:last-child{margin-right:22px}
.files{height:197px;width:125px;margin-top:5px;border:1px solid #ddd;border-left:2px solid #777;border-top:1px solid #696969;background:#fff}
.files div{height:18px;display:flex;align-items:center;white-space:nowrap;gap:2px;font-size:12px}
.files svg{width:16px;height:14px}
.tabs{display:flex;margin:3px 0 0 2px;height:20px}
.tabs div{width:62px;display:flex;align-items:center;gap:3px;padding-left:4px;border:1px solid #999;border-top:0;border-radius:0 0 4px 4px;color:#777}
.tabs .on{background:#fff;color:#000}
.toolbox{width:330px;margin-left:6px;display:flex;flex-direction:column}
.tbtree{flex:1;border:1px solid #828790;border-top:0;background:#fff;padding-top:1px}
.trow{height:20px;display:flex;align-items:center;padding-left:8px;font-size:12px}
.trow .i16{margin:0 5px 0 6px}
.trow.root{padding-left:0}.trow.root .i16{margin-right:4px;margin-left:5px}
.results{width:20px;height:71px;margin:1px 0 0 2px;border:1px solid #aaa;border-right:0;border-radius:4px 0 0 4px;display:flex;flex-direction:column;align-items:center;padding-top:4px;gap:2px;background:#f5f5f5}
.results span{writing-mode:vertical-rl;font:12px/14px "Liberation Mono",monospace;letter-spacing:-1.1px;color:#555}
.status{height:20px;flex:none;background:#f0f0f0;display:flex;align-items:center;padding-top:5px}
.status span{margin-left:16px;font-size:12.3px}
.s1,.s2{height:16px;border-right:1px solid #fff}.s1{width:1058px}.s2{width:10px}
.taskedge{height:2px;flex:none;background:#44565f}.taskedge i{height:2px;width:36px;margin-left:334px;background:#2d7184}
.editor{position:absolute;left:247px;top:101px;width:404px;height:45px;border:2px solid #858585;background:#fafafa;padding:1px}
.etitle{height:16px;background:#a0a0a0;color:#f4f4f4;display:flex;align-items:center;justify-content:space-between;padding-left:1px;font-size:12.5px}
.editor .tools{height:23px;padding-left:3px;background:linear-gradient(#fff,#ededed)}
.lab{display:flex;align-items:center;gap:3px;width:47px;font-size:12.5px}
.create{position:absolute;left:1064px;top:63px;width:272px;height:457px;background:#f0f0f0;border:1px solid #fff;border-right:2px solid #000;border-bottom:2px solid #000;padding:3px 1px 0 2px;display:flex;flex-direction:column}
.create .ctop{height:31px;display:flex;align-items:center;padding-left:7px;background:linear-gradient(#fafafa,#eee)}
.create .cap svg{margin-right:3px}
.ctop .dd{margin-left:4px}.org{margin:0 4px 0 7px}
.srch{width:160px;height:24px;border:1px solid #999;color:#777;display:flex;align-items:center;justify-content:space-between;padding:0 3px;margin-right:3px}
.srch .dd{width:7px;height:4px}.clr{margin-left:6px}
.tmpl{height:312px;border:1px solid #828790;color:#707070;text-align:center;padding-top:9px}
.split{height:15px;display:flex;align-items:center}
.split i{width:88px;height:1px;background:#999;margin-left:88px}.split svg{margin-left:66px}
.cons{flex:1;border-top:1px solid #999;border-left:1px solid #999;margin-bottom:1px}
.chead{display:flex;align-items:center;gap:1px;padding-top:4px}.chead b{margin-top:1px}
.cons p{margin:15px 0 0;text-align:center}
```
FILE: app.js
```js
const icon = n => `<svg class="i16"><use href="#${n}"/></svg>`;
const chev = '<svg width="10" height="6"><path d="M1 1l4 4 4-4"/></svg>';

document.querySelectorAll('[data-items]').forEach(bar => {
  bar.innerHTML = bar.dataset.items.split(' ').map(t => {
    if (t === '|') return '<i class="sep"></i>';
    if (t === 'grip') return '<i class="grip"></i>';
    if (t === 'more') return '<i class="more"><i class="dd"></i></i>';
    if (t === '▾') return '<i class="arr"><i class="dd"></i></i>';
    if (t === '▿') return '<i class="arr"><i class="dd g"></i></i>';
    if (t === 'scale') return `<div class="field">1:1,000${chev}</div>`;
    if (t === 'percent') return `<div class="field pct">100%${chev}</div>`;
    if (t === 'label') return '<span class="lab">Editor<i class="dd"></i></span>';
    if (t === 'ctools-off') return `<i class="btn faded">${icon('ctools')}</i>`;
    if (t[0] === '*') return `<i class="btn on">${icon(t.slice(1))}</i>`;
    if (t[0] === '~') return `<i class="btn off">${icon(t.slice(1))}</i>`;
    return `<i class="btn">${icon(t)}</i>`;
  }).join('');
});

const catalog = [
  [0, '+', 'cfolder', 'C:\\User'], [0, '+', 'cfolder', 'D:\\nghe'], [0, '+', 'cfolder', 'D:\\nghe'],
  [0, '+', 'cfolder', 'D:\\nghe'], [0, '-', 'cfolder', 'D:\\nghe'], [1, '+', 'folder', 'DoIr'],
  [1, '+', 'folder', 'GIS设'], [1, '+', 'folder', 'img'], [1, '+', 'folder', 'Web'], [1, '-', 'folder', '测量'],
  [2, '-', 'ofolder', 'd'], [3, '', 'shpline', ''], [3, '', 'shppt', ''], [3, '', 'shppt', ''],
  [2, '+', 'cad', '新'], [1, '+', 'folder', '计算'], [1, '+', 'folder', '软件'], [0, '-', 'cfolder', 'E:\\'],
  [1, '+', 'folder', '$REC'], [1, '', 'folder', '']
];
document.getElementById('cattree').innerHTML = catalog.map(([d, e, ic, s]) =>
  `<div class="crow d${d}">${e ? `<i class="ex ${e === '+' ? 'plus' : ''}"></i>` : ''}${icon(ic)}<span>${s}</span></div>`).join('');

document.getElementById('tbtree').innerHTML =
  `<div class="trow root">${icon('tbfolder')}<span>ArcT</span></div>` +
  [...'3ACCDDEGGLMNPSSSST'].map(c => `<div class="trow"><i class="ex plus"></i>${icon('tbx')}<span>${c}</span></div>`).join('');

/* Aerial raster: coarse cells of 4.5px, each region a polygon with its own tone and grain */
const W = 118, H = 139;
const g = document.getElementById('raster').getContext('2d');
let seed = 7;
const rnd = () => (seed = (seed * 16807) % 2147483647) / 2147483647;
const tone = Array.from({ length: W * H }, () => [200, 202, 203]);
const grain = new Float32Array(W * H);
function inside(p, x, y) {
  let r = false;
  for (let i = 0, j = p.length - 2; i < p.length; j = i, i += 2) {
    if ((p[i + 1] > y) !== (p[j + 1] > y) && x < (p[j] - p[i]) * (y - p[i + 1]) / (p[j + 1] - p[i + 1]) + p[i]) r = !r;
  }
  return r;
}
function poly(p, c, n, ragged = 0) {
  for (let j = 0; j < H; j++) for (let i = 0; i < W; i++) {
    const x = 329 + i * 4.5 + (rnd() - .5) * ragged, y = 106 + j * 4.5 + (rnd() - .5) * ragged;
    if (!inside(p, x, y)) continue;
    tone[j * W + i] = c;
    grain[j * W + i] = n;
  }
}
const box = (x1, y1, x2, y2, c, n, r) => poly([x1, y1, x2, y1, x2, y2, x1, y2], c, n, r);
box(320, 100, 860, 740, [198, 201, 202], 8);
box(320, 100, 400, 540, [189, 191, 194], 6);
for (const x of [334, 347, 362, 368, 380]) box(x, 100, x + 5, 520, [196, 198, 200], 5);
box(437, 140, 585, 165, [204, 202, 201], 7);
poly([390, 200, 415, 175, 460, 160, 520, 163, 600, 180, 600, 200, 482, 230, 482, 300, 392, 295], [163, 168, 171], 20, 10);
poly([415, 180, 450, 165, 540, 163, 540, 180, 445, 200, 415, 205], [155, 156, 162], 14, 6);
poly([575, 140, 651, 100, 725, 100, 735, 185, 600, 192, 575, 160], [170, 174, 176], 20, 8);
box(730, 100, 796, 160, [205, 203, 200], 9, 4);
poly([478, 198, 540, 182, 600, 188, 730, 187, 735, 168, 760, 158, 785, 175, 797, 195, 797, 234, 784, 222, 600, 226, 480, 232], [148, 148, 158], 9, 5);
box(570, 182, 620, 230, [132, 133, 141], 20, 8);
poly([482, 232, 560, 226, 784, 224, 784, 305, 482, 305], [204, 206, 207], 8, 2);
box(500, 245, 570, 290, [200, 202, 203], 22, 8);
box(680, 242, 775, 280, [202, 203, 204], 22, 8);
box(582, 230, 618, 302, [196, 198, 199], 15);
box(784, 270, 800, 370, [168, 170, 176], 12);
box(797, 100, 833, 740, [211, 215, 219], 6);
box(833, 100, 860, 260, [168, 169, 174], 14, 8);
box(824, 145, 842, 200, [196, 198, 200], 12);
box(836, 252, 860, 312, [211, 213, 215], 9);
box(832, 312, 860, 370, [178, 181, 184], 14, 8);
poly([392, 322, 425, 315, 490, 320, 500, 440, 480, 510, 440, 528, 395, 510], [163, 168, 170], 22, 12);
box(483, 300, 500, 430, [180, 184, 186], 12);
box(500, 303, 604, 350, [155, 156, 164], 8, 4);
box(500, 350, 514, 430, [162, 164, 171], 9, 4);
box(514, 350, 600, 432, [201, 204, 205], 6);
box(575, 352, 600, 425, [192, 195, 196], 11);
box(603, 300, 722, 420, [163, 167, 169], 22, 8);
box(677, 310, 704, 357, [195, 198, 199], 12, 4);
box(685, 325, 689, 355, [245, 247, 248], 3); box(681, 353, 693, 358, [245, 247, 248], 3);
box(705, 308, 797, 345, [160, 161, 168], 10, 4);
poly([728, 332, 800, 328, 804, 375, 730, 380, 716, 400, 715, 350], [150, 149, 160], 8, 4);
box(733, 376, 788, 485, [204, 206, 206], 9);
box(787, 370, 860, 545, [202, 206, 209], 8, 4);
poly([598, 405, 722, 395, 722, 432, 640, 448, 598, 448], [146, 145, 156], 8, 4);
box(482, 442, 790, 512, [206, 208, 208], 6);
box(510, 430, 604, 443, [165, 167, 174], 8);
box(567, 437, 625, 451, [158, 159, 167], 8);
box(725, 438, 772, 443, [166, 168, 175], 7);
box(522, 460, 540, 472, [218, 220, 220], 8, 4);
for (const [x, y, w, h] of [[605, 470, 75, 4], [622, 490, 90, 3], [690, 455, 45, 4], [688, 455, 4, 50], [742, 450, 4, 50], [648, 454, 4, 30]]) box(x, y, x + w, y + h, [187, 189, 191], 9);
box(775, 420, 790, 515, [172, 176, 180], 15, 5);
box(803, 470, 811, 507, [219, 221, 222], 20, 4);
poly([460, 510, 475, 515, 550, 520, 555, 555, 475, 555], [160, 165, 168], 17, 9);
box(608, 514, 700, 552, [163, 168, 172], 19, 10);
box(700, 490, 738, 535, [204, 204, 201], 14, 4);
box(740, 506, 824, 552, [154, 159, 164], 18, 8);
box(843, 415, 860, 540, [172, 175, 178], 14, 4);
box(320, 525, 460, 550, [203, 205, 208], 7);
box(320, 549, 860, 596, [193, 197, 202], 5, 4);
box(320, 595, 860, 740, [210, 215, 217], 5, 4);
box(320, 640, 480, 740, [215, 220, 223], 7);
for (const x of [535, 570, 606, 640, 676, 708, 740, 775, 808]) {
  box(x - 12, 585, x + 9, 615, [167, 172, 177], 12, 5);
  box(x - 10, 608, x + 11, 648, [184, 190, 189], 13, 4);
  box(x - 13, 645, x + 12, 675, [163, 170, 172], 16, 5);
  box(x - 10, 672, x + 9, 687, [175, 181, 184], 10, 4);
}
box(487, 598, 512, 625, [168, 173, 176], 10, 4);
box(456, 595, 473, 617, [167, 171, 177], 8);
poly([408, 623, 513, 621, 513, 682, 495, 726, 478, 726, 461, 690, 410, 650], [182, 185, 183], 4, 3);
poly([332, 690, 350, 700, 378, 728, 338, 728], [178, 183, 189], 8);
box(327, 625, 338, 653, [183, 187, 191], 8, 4);
box(847, 596, 860, 668, [183, 183, 182], 5);
[[513, 600], [577, 595], [622, 595], [680, 592], [686, 592], [690, 592]].forEach(([x, y]) => box(x, y, x + 5, y + 7, [245, 247, 248], 2));

/* Coarse lattice noise gives the canopy its clumps */
const lattice = Array.from({ length: 60 * 70 }, () => rnd() * 2 - 1);
function clump(i, j) {
  const x = i / 2.6, y = j / 2.6, a = x | 0, b = y | 0, u = x - a, v = y - b, k = b * 60 + a;
  return (lattice[k] * (1 - u) + lattice[k + 1] * u) * (1 - v) + (lattice[k + 60] * (1 - u) + lattice[k + 61] * u) * v;
}
for (let j = 0; j < H; j++) for (let i = 0; i < W; i++) {
  const me = tone[j * W + i], sum = [0, 0, 0];
  let n = 0;
  for (let q = -1; q < 2; q++) for (let p = -1; p < 2; p++) {
    const x = i + p, y = j + q;
    if (x < 0 || y < 0 || x >= W || y >= H) continue;
    tone[y * W + x].forEach((k, c) => { sum[c] += k; });
    n++;
  }
  const a = grain[j * W + i], v = (rnd() + rnd() - 1) * a * .9 + clump(i, j) * a * .85;
  g.fillStyle = `rgb(${me.map((k, c) => Math.round(k * .55 + sum[c] / n * .45 + v)).join(',')})`;
  g.fillRect(i, j, 1, 1);
}

const marks = [[520, 332], [602, 329], [516, 347], [605, 414], [730, 357], [754, 356], [755, 346], [785, 345], [707, 420], [732, 417], [606, 425], [790, 479], [734, 473], [733, 480], [711, 481], [497, 431], [519, 429], [498, 488], [396, 306], [694, 310], [807, 298], [455, 598]];
const pins = [[395, 304], [693, 309], [807, 297], [786, 547], [454, 596]];
document.getElementById('vectors').innerHTML =
  '<path d="M520 333L602 330L606 426L707 422L733 418L731 358L754 356L755 347L785 345L791 479L735 482L734 473L712 473L711 483L499 489L497 431L520 430L517 348Z" fill="none" stroke="#000" stroke-width="3" shape-rendering="crispEdges"/>' +
  pins.map(([x, y]) => `<use href="#tack" x="${x - 5}" y="${y - 5}" width="10" height="14"/>`).join('') +
  marks.map(([x, y]) => `<path d="M${x - 4} ${y + .5}h9M${x + .5} ${y - 4}v9" stroke="#ff0" stroke-width="1.3"/>`).join('');
```
